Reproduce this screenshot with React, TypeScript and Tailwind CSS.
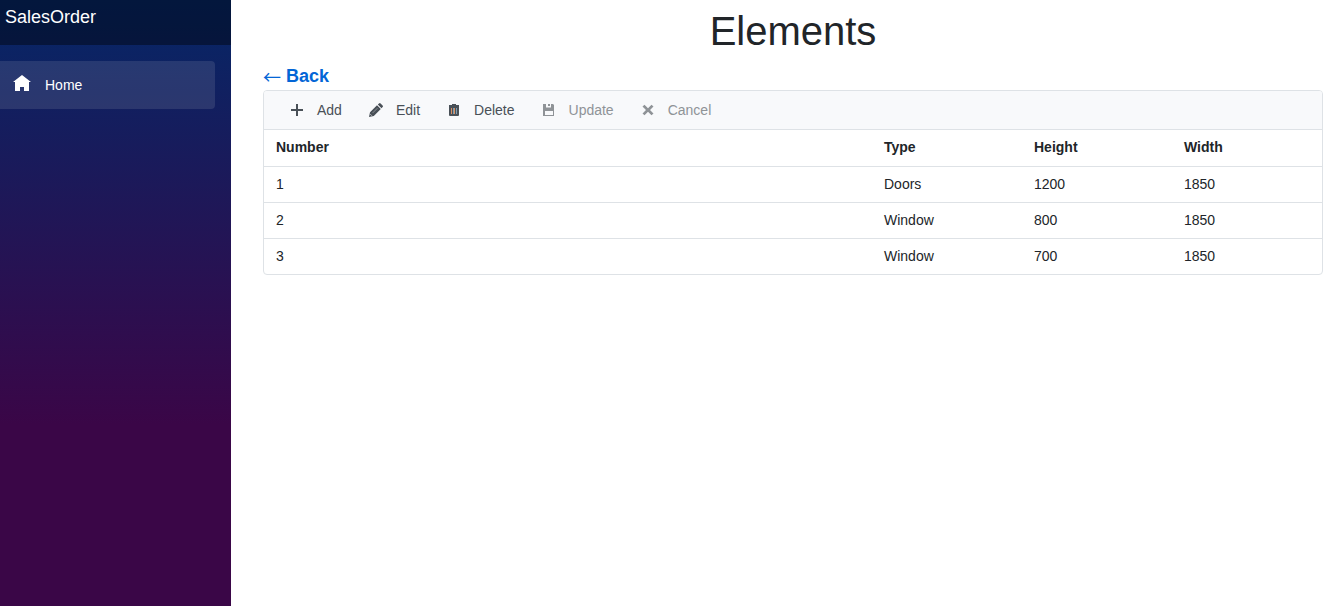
import type { ReactNode } from 'react';

type Row = { number: number; type: string; height: number; width: number };

const rows: Row[] = [
  { number: 1, type: 'Doors', height: 1200, width: 1850 },
  { number: 2, type: 'Window', height: 800, width: 1850 },
  { number: 3, type: 'Window', height: 700, width: 1850 },
];

function Icon({ children }: { children: ReactNode }) {
  return (
    <svg viewBox="0 0 14 14" className="size-3.5 shrink-0" fill="currentColor" aria-hidden="true">
      {children}
    </svg>
  );
}

function HomeIcon() {
  return (
    <svg viewBox="0 0 18 20" className="h-5 w-[18px] shrink-0" fill="currentColor" aria-hidden="true">
      <path d="M9 0L0 7h2v9h5v-4h4v4h5V7h2z" />
    </svg>
  );
}

const tools: { label: string; disabled?: boolean; icon: ReactNode }[] = [
  { label: 'Add', icon: <path d="M6 1h2v5h5v2H8v5H6V8H1V6h5z" /> },
  {
    label: 'Edit',
    icon: (
      <>
        <path d="M0 14l1-4.800L8 2.200l3.800 3.800-7 7zM8.800 1.500L10 .4q.8-.8 1.600 0l2 2q.8.8 0 1.600l-1.100 1.200z" />
        <path d="M3.600 10l4.800-4.800" stroke="#a4a8ac" strokeWidth=".7" />
        <path d="M1.400 11.300l1.300 1.300" stroke="#f8f9fb" strokeWidth=".8" />
      </>
    ),
  },
  {
    label: 'Delete',
    icon: (
      <>
        <path d="M2 2h3V1h4v1h3v2H2zM2 4h10V12q0 1-1 1H3q-1 0-1-1z" />
        <path d="M4.500 5v6M7.500 5v6" stroke="#d98f62" strokeWidth="1" />
        <path d="M6.500 5v6M9.500 5v6" stroke="#7f9db0" strokeWidth="1" />
      </>
    ),
  },
  {
    label: 'Update',
    disabled: true,
    icon: (
      <path
        fillRule="evenodd"
        d="M1 1h10l1 1v11H1zM4 1v3.500h5V1H8v2H6V1zM3 8v4h8V8z"
      />
    ),
  },
  {
    label: 'Cancel',
    disabled: true,
    icon: <path d="M1.500 3.500L3.500 1.700 7 5.200l3.500-3.500 2 1.800L9 7l3.500 3.500-2 1.800L7 8.800l-3.500 3.500-2-1.800L5 7z" />,
  },
];

export default function App() {
  return (
    <div className="flex min-h-screen bg-white font-['Liberation_Sans',Arial,sans-serif] text-[#212529]">
      <aside className="w-[231px] shrink-0 bg-[linear-gradient(180deg,#052767_0%,#3a0647_70%)] text-white">
        <div className="h-[45px] bg-black/40 px-[5px] pt-[5px]">
          <a href="#" className="text-lg leading-6">
            SalesOrder
          </a>
        </div>
        <nav className="pt-4 pr-4">
          <a
            href="#"
            className="flex h-12 items-center gap-3.5 rounded-r bg-[#d7d7d7]/13 pl-[13px] text-sm"
          >
            <HomeIcon />
            Home
          </a>
        </nav>
      </aside>

      <main className="min-w-0 flex-1 pt-[7px] pr-[15px] pl-8">
        <h1 className="mb-2 text-center text-[40px] leading-12">Elements</h1>
        <a
          href="#"
          className="mb-px flex w-fit gap-[5px] text-lg leading-[26px] font-bold text-[#0366d6]"
        >
          <span className="font-['Noto_Sans_CJK_JP',sans-serif] font-normal">←</span>
          Back
        </a>

        <section className="overflow-hidden rounded border border-[#dee2e6] text-sm">
          <div
            role="toolbar"
            aria-label="Elements"
            className="flex gap-[3px] border-b border-[#dee2e6] bg-[#f8f9fb] pl-3.5 text-[#495057]"
          >
            {tools.map((tool) => (
              <button
                key={tool.label}
                type="button"
                disabled={tool.disabled}
                className="flex h-[38px] items-center gap-[13px] px-3 disabled:text-[#8f9397]"
              >
                <Icon>{tool.icon}</Icon>
                {tool.label}
              </button>
            ))}
          </div>
          <table className="w-full table-fixed text-left">
            <thead>
              <tr className="h-9">
                <th className="px-3 pb-0.5">Number</th>
                <th className="w-[150px] px-3 pb-0.5">Type</th>
                <th className="w-[150px] px-3 pb-0.5">Height</th>
                <th className="w-[150px] px-3 pb-0.5">Width</th>
              </tr>
            </thead>
            <tbody>
              {rows.map((row) => (
                <tr key={row.number} className="h-9 border-t border-[#dee2e6]">
                  <td className="px-3">{row.number}</td>
                  <td className="px-3">{row.type}</td>
                  <td className="px-3">{row.height}</td>
                  <td className="px-3">{row.width}</td>
                </tr>
              ))}
            </tbody>
          </table>
        </section>
      </main>
    </div>
  );
}
